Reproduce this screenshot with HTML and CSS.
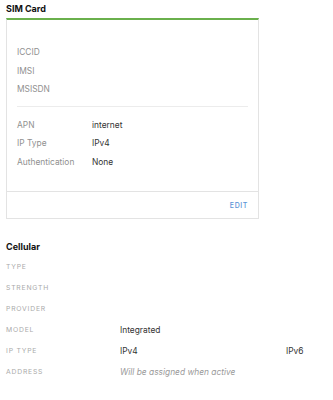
FILE: index.html
```html
<!DOCTYPE html>
<html lang="en">
<head>
  <meta charset="UTF-8" />
  <title>SIM Card</title>
  <meta name="viewport" content="width=device-width, initial-scale=1.0" />
  <link rel="stylesheet" href="styles.css">
</head>
<body>

  <!-- SIM card panel -->
  <h2 class="section-title">SIM Card</h2>
  <div class="card">
    <div class="card-body">
      <div class="field-list">
        <div class="field"><span class="field-label">ICCID</span><span class="field-value"></span></div>
        <div class="field"><span class="field-label">IMSI</span><span class="field-value"></span></div>
        <div class="field"><span class="field-label">MSISDN</span><span class="field-value"></span></div>
      </div>
      <div class="divider"></div>
      <div class="field-list">
        <div class="field"><span class="field-label">APN</span><span class="field-value">internet</span></div>
        <div class="field"><span class="field-label">IP Type</span><span class="field-value">IPv4</span></div>
        <div class="field"><span class="field-label">Authentication</span><span class="field-value">None</span></div>
      </div>
    </div>
    <div class="card-footer">
      <a class="edit-link" href="#">EDIT</a>
    </div>
  </div>

  <!-- Cellular info -->
  <h2 class="section-title cellular-title">Cellular</h2>
  <div class="info-table">
    <div class="info-row"><span class="info-label">Type</span><span class="info-value"></span><span class="info-extra"></span></div>
    <div class="info-row"><span class="info-label">Strength</span><span class="info-value"></span><span class="info-extra"></span></div>
    <div class="info-row"><span class="info-label">Provider</span><span class="info-value"></span><span class="info-extra"></span></div>
    <div class="info-row"><span class="info-label">Model</span><span class="info-value">Integrated</span><span class="info-extra"></span></div>
    <div class="info-row"><span class="info-label">IP Type</span><span class="info-value">IPv4</span><span class="info-extra">IPv6</span></div>
    <div class="info-row"><span class="info-label">Address</span><span class="info-value muted">Will be assigned when active</span><span class="info-extra"></span></div>
  </div>

</body>
</html>
```

FILE: styles.css
```css
* { margin: 0; padding: 0; box-sizing: border-box; }
body {
  font-family: Inter, "Noto Sans", sans-serif;
  background: #fff;
  color: #222;
  padding: 0 6px;
  font-size: 8.4px;
}

.section-title {
  font-size: 9px;
  font-weight: 700;
  color: #111;
  line-height: 12px;
  padding-top: 3px;
  height: 18px;
}

.card {
  width: 253px;
  border: 1px solid #e3e3e3;
  border-top: 2px solid #6ab04c;
}

.card-body {
  padding: 23px 10px 20px;
}

.field-list {
  display: flex;
  flex-direction: column;
}

.field {
  display: flex;
  height: 18.5px;
  align-items: center;
}

.field-label {
  width: 75px;
  color: #909090;
}

.field-value {
  color: #333;
}

.divider {
  height: 1px;
  background: #ececec;
  margin: 7px 0 9px;
}

.card-footer {
  border-top: 1px solid #e3e3e3;
  height: 27px;
  display: flex;
  justify-content: flex-end;
  align-items: center;
  padding-right: 10px;
}

.edit-link {
  color: #5a93d6;
  text-decoration: none;
  font-size: 7px;
  font-weight: 500;
  letter-spacing: 0.6px;
}

.cellular-title {
  margin-top: 19px;
  height: 18px;
}

.info-row {
  display: flex;
  height: 21px;
  align-items: center;
}

.info-label {
  width: 114px;
  color: #aaa;
  font-size: 6.8px;
  text-transform: uppercase;
  letter-spacing: 0.8px;
}

.info-value {
  width: 166px;
  color: #333;
}

.info-value.muted {
  color: #9a9a9a;
  font-style: italic;
}

.info-extra {
  color: #333;
}
```
